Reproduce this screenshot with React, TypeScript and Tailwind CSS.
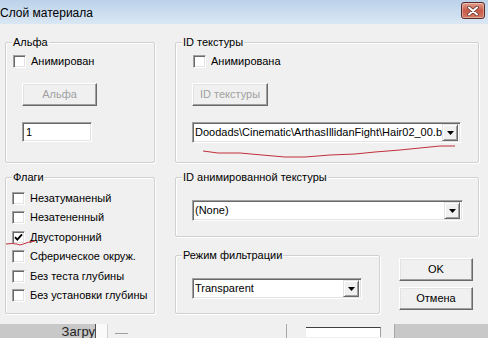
import React from "react";

const font = { fontFamily: '"Liberation Sans", Arial, sans-serif' };

function Check({ checked = false }: { checked?: boolean }) {
  return (
    <div className="w-[13px] h-[13px] shrink-0 bg-white border border-t-[#a0a0a0] border-l-[#a0a0a0] border-b-white border-r-white shadow-[inset_1px_1px_0_#696969,inset_-1px_-1px_0_#e3e3e3] flex items-center justify-center">
      {checked && (
        <svg width="9" height="9" viewBox="0 0 9 9">
          <path d="M1 4.2 L3.3 6.6 L8 1.4" stroke="#000" strokeWidth="1.9" fill="none" />
        </svg>
      )}
    </div>
  );
}

function CheckRow({ label, checked = false }: { label: string; checked?: boolean }) {
  return (
    <div className="flex items-center gap-[5px] text-[11px] text-black leading-[13px]">
      <Check checked={checked} />
      <span>{label}</span>
    </div>
  );
}

function Group({
  label,
  className,
  children,
}: {
  label: string;
  className: string;
  children?: React.ReactNode;
}) {
  return (
    <div
      className={
        "relative shrink-0 border border-[#d0d0d0] rounded-[2px] shadow-[inset_1px_1px_0_#ffffff,1px_1px_0_#ffffff] " +
        className
      }
    >
      <span className="absolute -top-[7px] left-[6px] px-[1px] bg-[#f0f0f0] text-[11px] leading-[13px] text-black whitespace-nowrap">
        {label}
      </span>
      {children}
    </div>
  );
}

function RaisedButton({
  label,
  disabled = false,
  className,
}: {
  label: string;
  disabled?: boolean;
  className: string;
}) {
  return (
    <div
      className={
        "bg-[#f0f0f0] border border-t-white border-l-white border-b-[#696969] border-r-[#696969] shadow-[inset_-1px_-1px_0_#a0a0a0,inset_1px_1px_0_#e3e3e3] flex items-center justify-center text-[11px] leading-[13px] " +
        (disabled ? "text-[#a0a0a0] " : "text-black ") +
        className
      }
    >
      {label}
    </div>
  );
}

function Combo({ text, className }: { text: string; className: string }) {
  return (
    <div
      className={
        "bg-white border border-t-[#a0a0a0] border-l-[#a0a0a0] border-b-white border-r-white shadow-[inset_1px_1px_0_#696969,inset_-1px_-1px_0_#e3e3e3] flex items-center pl-[2px] pr-[2px] " +
        className
      }
    >
      <span className="flex-1 min-w-0 overflow-hidden whitespace-nowrap text-[11px] leading-[13px] text-black">
        {text}
      </span>
      <div className="w-[16px] h-[17px] shrink-0 bg-[#f0f0f0] border border-t-[#e3e3e3] border-l-[#e3e3e3] border-b-[#696969] border-r-[#696969] shadow-[inset_1px_1px_0_#ffffff,inset_-1px_-1px_0_#a0a0a0] flex items-center justify-center">
        <svg width="7" height="4" viewBox="0 0 7 4">
          <path d="M0 0 H7 L3.5 4 Z" fill="#000" />
        </svg>
      </div>
    </div>
  );
}

export default function App() {
  return (
    <div
      className="relative w-[488px] h-[338px] overflow-hidden bg-[#f0f0f0] flex flex-col"
      style={font}
    >
      {/* Title bar */}
      <div className="h-[24px] shrink-0 bg-gradient-to-b from-[#bcd2ea] to-[#dae7f4] flex items-center justify-between pr-[2px]">
        <span className="text-[12px] leading-[14px] text-black pl-0 pt-[2px]">Слой материала</span>
        <div className="w-[24px] h-[17px] mr-[1px] mt-[-3px] rounded-[3px] border border-[#5a2a26] bg-gradient-to-b from-[#e0a090] via-[#c75a48] to-[#d37a66] flex items-center justify-center shadow-[inset_0_0_0_1px_rgba(255,255,255,0.35)]">
          <svg width="12" height="10" viewBox="0 0 12 10">
            <path d="M2 1.5 L10 8.5 M10 1.5 L2 8.5" stroke="#5a2a26" strokeWidth="3.4" strokeLinecap="round" />
            <path d="M2 1.5 L10 8.5 M10 1.5 L2 8.5" stroke="#ffffff" strokeWidth="2" strokeLinecap="round" />
          </svg>
        </div>
      </div>

      {/* Body */}
      <div className="flex flex-col pl-[5px] pt-[18px]">
        <div className="flex gap-[20px]">
          <Group label="Альфа" className="w-[150px] h-[121px] pt-[12px] pl-[7px]">
            <CheckRow label="Анимирован" />
            <RaisedButton label="Альфа" disabled className="ml-[9px] mt-[15px] w-[75px] h-[23px]" />
            <div className="ml-[9px] mt-[16px] w-[70px] h-[20px] bg-white border border-t-[#a0a0a0] border-l-[#a0a0a0] border-b-white border-r-white shadow-[inset_1px_1px_0_#696969,inset_-1px_-1px_0_#e3e3e3] flex items-center pl-[3px] text-[11px] leading-[13px]">
              1
            </div>
          </Group>
          <Group label="ID текстуры" className="w-[304px] h-[121px] pt-[12px] pl-[17px]">
            <CheckRow label="Анимирована" />
            <RaisedButton label="ID текстуры" disabled className="-ml-[1px] mt-[15px] w-[76px] h-[23px]" />
            <Combo
              text="Doodads\Cinematic\ArthasIllidanFight\Hair02_00.blp"
              className="-ml-[1px] mt-[16px] w-[269px] h-[21px]"
            />
          </Group>
        </div>

        <div className="flex gap-[20px] mt-[14px]">
          <Group label="Флаги" className="w-[150px] h-[137px] pt-[14px] pl-[6px]">
            <div className="flex flex-col gap-[6.4px]">
              <CheckRow label="Незатуманеный" />
              <CheckRow label="Незатененный" />
              <CheckRow label="Двусторонний" checked />
              <CheckRow label="Сферическое окруж." />
              <CheckRow label="Без теста глубины" />
              <CheckRow label="Без установки глубины" />
            </div>
          </Group>
          <div className="flex flex-col w-[304px]">
            <Group label="ID анимированной текстуры" className="w-[304px] h-[60px] pt-[22px] pl-[16px]">
              <Combo text="(None)" className="w-[271px] h-[21px]" />
            </Group>
            <div className="flex mt-[18px]">
              <Group label="Режим фильтрации" className="w-[205px] h-[59px] pt-[22px] pl-[16px]">
                <Combo text="Transparent" className="w-[170px] h-[21px]" />
              </Group>
              <div className="flex flex-col ml-[19px] pt-[3px] gap-[6px]">
                <RaisedButton label="OK" className="w-[74px] h-[23px]" />
                <RaisedButton label="Отмена" className="w-[74px] h-[23px]" />
              </div>
            </div>
          </div>
        </div>
      </div>

      {/* Bottom strip of underlying window */}
      <div className="mt-auto h-[14px] shrink-0 flex flex-col">
        <div className="h-[1px] bg-[#2f5f86]" />
        <div className="h-[1px] bg-[#7cc3e6]" />
        <div className="flex-1 flex">
          <div className="w-[95px] bg-[#c8c8c8] flex justify-end overflow-hidden">
            <span className="text-[13px] leading-[15px] text-[#222]">Загру</span>
          </div>
          <div className="w-[1px] bg-[#505050]" />
          <div className="w-[11px] bg-[#fafafa]" />
          <div className="w-[1px] bg-[#d0d0d0]" />
          <div className="w-[178px] bg-[#f0f0f0] pl-[7px] pt-[9px]">
            <div className="w-[13px] h-[1px] bg-[#a0a0a0]" />
          </div>
          <div className="w-[1px] bg-[#a8a8a8]" />
          <div className="w-[107px] bg-[#f0f0f0] pl-[19px] pt-[3px] flex">
            <div className="w-[75px] h-[10px] border-t border-[#404040] border-r border-r-[#a0a0a0] bg-white" />
          </div>
          <div className="w-[1px] bg-[#a8a8a8]" />
          <div className="flex-1 bg-[#c8c8c8]" />
        </div>
      </div>

      {/* Red hand-drawn annotations */}
      <svg className="absolute left-0 top-0 pointer-events-none" width="488" height="338">
        <polyline
          points="203,151 218,153 240,153 262,155 285,157 305,157 330,155 355,154 375,152 400,150 420,148 440,146 455,146"
          fill="none"
          stroke="#c0303a"
          strokeWidth="1"
        />
        <path
          d="M6 244 Q12 243 17 244 Q20 246 23 244 Q28 242 35 241"
          fill="none"
          stroke="#c0303a"
          strokeWidth="1"
        />
      </svg>
    </div>
  );
}
